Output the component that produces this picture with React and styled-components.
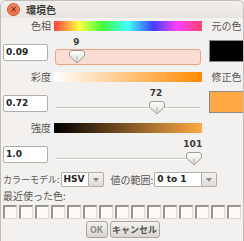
import React from "react";
import styled, { createGlobalStyle } from "styled-components";

const GlobalStyle = createGlobalStyle`
  html, body {
    margin: 0;
    padding: 0;
    background: #f2f1f0;
  }
  body {
    font-family: "Noto Sans CJK JP", "DejaVu Sans", sans-serif;
    color: #4c4a47;
  }
`;

const Window = styled.div`
  width: 244px;
  height: 241px;
  box-sizing: border-box;
  border: 1px solid #c2bdb7;
  border-bottom: none;
  border-radius: 6px 6px 0 0;
  background: #f2f1f0;
  overflow: hidden;
  display: flex;
  flex-direction: column;
`;

const TitleBar = styled.div`
  height: 17px;
  flex: none;
  display: flex;
  align-items: center;
  gap: 7px;
  padding-left: 7px;
  background: linear-gradient(#f1efed, #e7e4e1);
`;

const CloseButton = styled.div`
  width: 11px;
  height: 11px;
  border-radius: 50%;
  background: radial-gradient(circle at 50% 40%, #f79064, #e25c2e);
  box-shadow: 0 0 0 1px #c95428;
  color: #7a2e12;
  font: bold 8px/11px "DejaVu Sans", sans-serif;
  text-align: center;
`;

const Title = styled.div`
  font-size: 10px;
  font-weight: bold;
  color: #3c3b37;
  line-height: 12px;
`;

const Body = styled.div`
  padding: 3px 0 0 1px;
  display: flex;
  flex-direction: column;
`;

const Channel = styled.div`
  display: grid;
  grid-template-columns: 52px 148px 42px;
  grid-template-rows: 10px 41px;
`;

const Label = styled.div`
  font-size: 10px;
  line-height: 10px;
  text-align: right;
  padding-right: 3px;
  color: #595753;
`;

const Bar = styled.div`
  height: 10px;
  background: ${(p) => p.$gradient};
`;

const SideLabel = styled.div`
  font-size: 10px;
  line-height: 10px;
  padding-left: 7px;
  text-align: center;
  color: #595753;
  white-space: nowrap;
`;

const Field = styled.div`
  margin: 13px 0 0 1px;
  width: 45px;
  height: 17px;
  box-sizing: border-box;
  border: 1px solid #b3aea8;
  border-radius: 2px;
  background: #fff;
  padding-left: 2px;
  font: bold 9px/15px "DejaVu Sans", sans-serif;
  color: #222;
`;

const SliderWrap = styled.div`
  position: relative;
  padding: 18px 1px 0 1px;
`;

const Trough = styled.div`
  height: 16px;
  box-sizing: border-box;
  border-radius: 3px;
  ${(p) =>
    p.$active
      ? `background: #f9ddd2; border: 1px solid #e9a68c;`
      : `background: linear-gradient(transparent 7px, #c9c5c0 7px, #c9c5c0 8px, #fff 8px, #fff 9px, transparent 9px);`}
`;

const ValueText = styled.div`
  position: absolute;
  top: 7px;
  transform: translateX(-50%);
  font: bold 9px/9px "DejaVu Sans", sans-serif;
  color: #3c3b37;
`;

const Thumb = styled.svg`
  position: absolute;
  top: 19px;
  width: 16px;
  height: 14px;
  transform: translateX(-50%);
`;

const Swatch = styled.div`
  margin: 9px 0 0 7px;
  width: 35px;
  height: 22px;
  box-sizing: border-box;
  border: 1px solid #8e8a85;
  background: ${(p) => p.$color};
`;

const OptionsRow = styled.div`
  display: flex;
  align-items: center;
  height: 15px;
  margin-top: -2px;
  padding-left: 1px;
`;

const OptionLabel = styled.span`
  font-size: ${(p) => p.$size || 10}px;
  line-height: 12px;
  color: #595753;
  white-space: nowrap;
  margin-left: ${(p) => p.$gap || 0}px;
  margin-right: 1px;
`;

const Combo = styled.div`
  display: flex;
  height: 15px;
`;

const ComboEntry = styled.div`
  width: ${(p) => p.$width}px;
  box-sizing: border-box;
  border: 1px solid #b3aea8;
  border-right: none;
  border-radius: 2px 0 0 2px;
  background: #fff;
  padding-left: 2px;
  font: bold 9px/13px "DejaVu Sans", sans-serif;
  color: #222;
`;

const ComboArrow = styled.div`
  width: 16px;
  box-sizing: border-box;
  border: 1px solid #b3aea8;
  border-radius: 0 2px 2px 0;
  background: linear-gradient(#f4f3f1, #dedbd7);
  display: flex;
  align-items: center;
  justify-content: center;
  &::after {
    content: "";
    border-left: 3px solid transparent;
    border-right: 3px solid transparent;
    border-top: 4px solid #8c8883;
  }
`;

const RecentLabel = styled.div`
  font-size: 10px;
  line-height: 10px;
  margin: 4px 0 0 1px;
  color: #595753;
`;

const RecentRow = styled.div`
  display: flex;
  gap: 2px;
  margin: 4px 0 0 1px;
`;

const RecentSwatch = styled.div`
  width: 14px;
  height: 14px;
  box-sizing: border-box;
  border-style: solid;
  border-width: 2px 1px 1px 2px;
  border-color: #9a9691 #dcd9d5 #dcd9d5 #9a9691;
  background: #fbfaf9;
`;

const ButtonRow = styled.div`
  display: flex;
  justify-content: center;
  gap: 2px;
  margin-top: 2px;
`;

const Button = styled.div`
  width: ${(p) => p.$width}px;
  height: 17px;
  box-sizing: border-box;
  border: 1px solid #a9a5a0;
  border-radius: 3px;
  background: linear-gradient(#f2f1ef, #d9d6d2);
  font-size: 9px;
  font-weight: bold;
  line-height: 15px;
  white-space: nowrap;
  text-align: center;
  color: ${(p) => (p.$muted ? "#8d8b88" : "#55534f")};
`;

const thumbX = (v) => 12 + v * 1.265;

const SliderThumb = ({ x }) => (
  <Thumb viewBox="0 0 16 14" style={{ left: `${x}px` }}>
    <defs>
      <linearGradient id="tg" x1="0" y1="0" x2="0" y2="1">
        <stop offset="0" stopColor="#ffffff" />
        <stop offset="1" stopColor="#dcd9d5" />
      </linearGradient>
    </defs>
    <path
      d="M3 0.5 H13 Q15.5 0.5 15.5 3 V6 L8 13 L0.5 6 V3 Q0.5 0.5 3 0.5 Z"
      fill="url(#tg)"
      stroke="#9d9994"
    />
    <path d="M8 6 V11" stroke="#b9b5b0" />
  </Thumb>
);

const channels = [
  {
    label: "色相",
    gradient:
      "linear-gradient(to right, #ff4040, #ffff40 17%, #40ff40 33%, #40ffff 50%, #4040ff 67%, #ff40ff 83%, #ff4070)",
    side: "元の色",
    field: "0.09",
    value: 9,
    active: true,
    swatch: "#000000",
  },
  {
    label: "彩度",
    gradient: "linear-gradient(to right, #ffffff, #ff8a00)",
    side: "修正色",
    field: "0.72",
    value: 72,
    swatch: "#ffa944",
  },
  {
    label: "強度",
    gradient: "linear-gradient(to right, #000000, #ffaa47)",
    field: "1.0",
    value: 101,
  },
];

const App = () => {
  return (
    <>
      <GlobalStyle />
      <Window>
        <TitleBar>
          <CloseButton>×</CloseButton>
          <Title>環境色</Title>
        </TitleBar>
        <Body>
          {channels.map((c) => (
            <Channel key={c.label}>
              <Label>{c.label}</Label>
              <Bar $gradient={c.gradient} />
              <SideLabel>{c.side}</SideLabel>
              <Field>{c.field}</Field>
              <SliderWrap>
                <Trough $active={c.active} />
                <ValueText style={{ left: `${thumbX(c.value) - 1}px` }}>{c.value}</ValueText>
                <SliderThumb x={thumbX(c.value)} />
              </SliderWrap>
              <div>{c.swatch && <Swatch $color={c.swatch} />}</div>
            </Channel>
          ))}
          <OptionsRow>
            <OptionLabel $size={9}>カラーモデル:</OptionLabel>
            <Combo>
              <ComboEntry $width={27}>HSV</ComboEntry>
              <ComboArrow />
            </Combo>
            <OptionLabel $gap={7}>値の範囲:</OptionLabel>
            <Combo>
              <ComboEntry $width={47}>0 to 1</ComboEntry>
              <ComboArrow />
            </Combo>
          </OptionsRow>
          <RecentLabel>最近使った色:</RecentLabel>
          <RecentRow>
            {Array.from({ length: 15 }, (_, i) => (
              <RecentSwatch key={i} />
            ))}
          </RecentRow>
          <ButtonRow>
            <Button $width={22} $muted>
              OK
            </Button>
            <Button $width={50}>キャンセル</Button>
          </ButtonRow>
        </Body>
      </Window>
    </>
  );
};

export default App;
